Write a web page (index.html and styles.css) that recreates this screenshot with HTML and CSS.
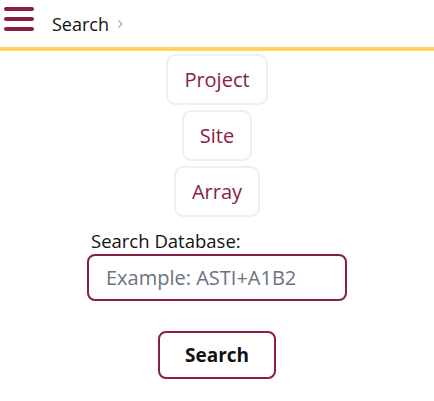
FILE: index.html
```html
<!DOCTYPE html>
<html>
<head>
<meta charset="utf-8">
<link rel="stylesheet" href="styles.css">
</head>
<body>
<header class="topbar">
  <button class="menu" aria-label="Menu">
    <svg width="30" height="24" viewBox="0 0 30 24"><g stroke="#8a1c45" stroke-width="4" stroke-linecap="round"><line x1="2" y1="2" x2="28" y2="2"/><line x1="2" y1="12" x2="28" y2="12"/><line x1="2" y1="22" x2="28" y2="22"/></g></svg>
  </button>
  <span class="crumb">Search</span>
  <svg class="chev" width="7" height="10" viewBox="0 0 7 10"><path d="M1.5 1.5 L5 5 L1.5 8.5" fill="none" stroke="#aaa" stroke-width="1.3"/></svg>
</header>
<main class="content">
  <div class="types">
    <button class="type">Project</button>
    <button class="type">Site</button>
    <button class="type">Array</button>
  </div>
  <form class="search">
    <label class="label" for="q">Search Database:</label>
    <input id="q" class="input" placeholder="Example: ASTI+A1B2">
    <button type="button" class="go">Search</button>
  </form>
</main>
</body>
</html>
```
FILE: styles.css
```css
* { box-sizing: border-box; }
body {
  margin: 0;
  font-family: "Open Sans", sans-serif;
  background: #fff;
  color: #111;
}
.topbar {
  height: 51px;
  display: flex;
  align-items: flex-start;
  border-bottom: 4px solid #fcd462;
  padding: 7px 0 0 4px;
}
.menu {
  background: none;
  border: 0;
  padding: 0;
  width: 30px;
  height: 24px;
  display: flex;
}
.crumb {
  margin-left: 18px;
  margin-top: 5px;
  font-size: 18px;
  line-height: 24px;
  color: #111;
}
.chev { margin-left: 8px; margin-top: 12px; }
.content {
  display: flex;
  flex-direction: column;
  align-items: center;
  padding-top: 3px;
}
.types {
  display: flex;
  flex-direction: column;
  align-items: center;
  gap: 5px;
}
.type {
  font-family: "Open Sans", sans-serif;
  font-size: 20px;
  line-height: 29px;
  color: #8a1c45;
  background: #fff;
  border: 2px solid #efefef;
  border-radius: 9px;
  padding: 9px 16px;
}
.search {
  display: flex;
  flex-direction: column;
  align-items: center;
  margin-top: 11px;
}
.label {
  align-self: flex-start;
  margin-left: 4px;
  font-size: 18.5px;
  line-height: 25px;
  color: #111;
}
.input {
  margin-top: 1px;
  width: 260px;
  height: 47px;
  border: 2px solid #8a1c45;
  border-radius: 8px;
  padding: 0 17px;
  font-family: "Open Sans", sans-serif;
  font-size: 20px;
  color: #111;
}
.input::placeholder { color: #6b7280; }
.go {
  margin-top: 30px;
  width: 118px;
  height: 48px;
  background: #fff;
  border: 2px solid #8a1c45;
  border-radius: 8px;
  font-family: "Open Sans", sans-serif;
  font-size: 19px;
  font-weight: 700;
  color: #111;
}
```
